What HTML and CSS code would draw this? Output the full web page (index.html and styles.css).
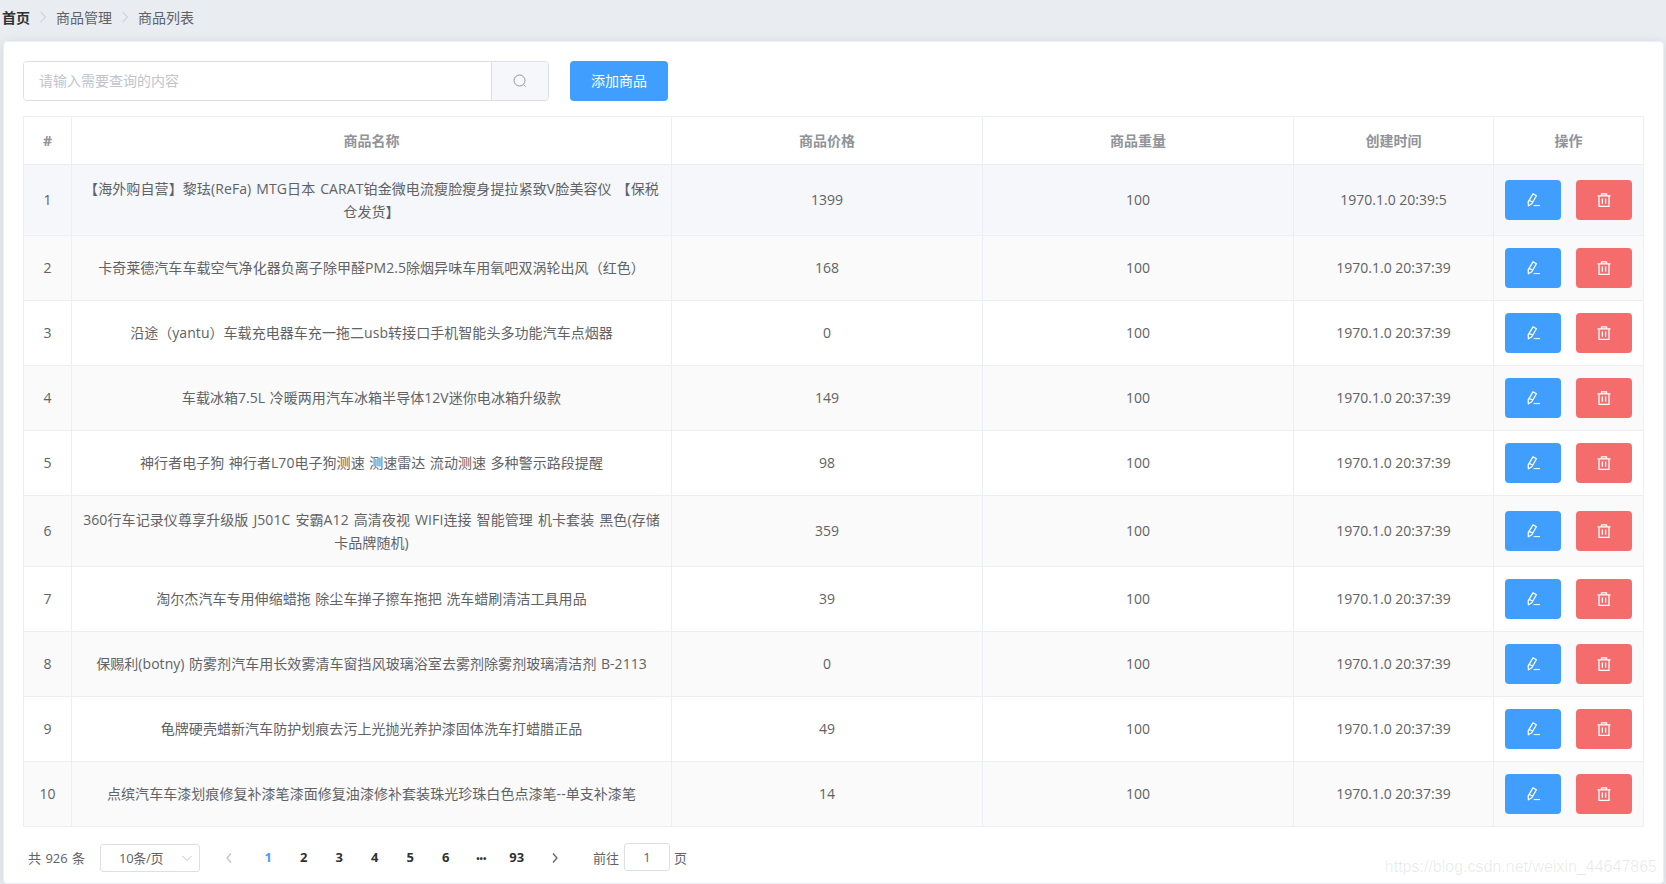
FILE: index.html
```html
<!DOCTYPE html>
<html lang="zh-CN">
<head>
<meta charset="utf-8">
<title>商品列表</title>
<link rel="stylesheet" href="styles.css">
</head>
<body>
<svg class="defs" width="0" height="0" aria-hidden="true">
  <symbol id="i-edit" viewBox="0 0 14 14"><path d="M2.4 12.8 2.2 8.8 7 .8 10.4 2.8 5.8 10.8Z M3.2 7.2 6.8 9.3" fill="none" stroke="currentColor" stroke-width="1.3" stroke-linejoin="round"/><path d="M7.6 12.6H14" fill="none" stroke="currentColor" stroke-width="1"/></symbol>
  <symbol id="i-del" viewBox="0 0 14 14"><path d="M.5 2.8H13.5M4.5 2.8V.8H9.5V2.8M2 2.8V13.3H12V2.8M5.4 5.6V10.8M8.6 5.6V10.8" fill="none" stroke="currentColor" stroke-width="1.3"/></symbol>
</svg>
<nav class="crumbs">
  <span class="crumb-home">首页</span>
  <svg class="crumb-sep" viewBox="0 0 8 12"><path d="M1.5 1 6.5 6 1.5 11" fill="none" stroke="currentColor"/></svg>
  <span>商品管理</span>
  <svg class="crumb-sep" viewBox="0 0 8 12"><path d="M1.5 1 6.5 6 1.5 11" fill="none" stroke="currentColor"/></svg>
  <span>商品列表</span>
</nav>
<main class="card">
  <div class="toolbar">
    <div class="search">
      <input class="search-input" placeholder="请输入需要查询的内容">
      <span class="search-btn"><svg class="search-icon" viewBox="0 0 14 14"><circle cx="6.5" cy="6.5" r="5.5" fill="none" stroke="currentColor"/><path d="M10.6 10.6 12.6 12.6" fill="none" stroke="currentColor"/></svg></span>
    </div>
    <button class="add-btn">添加商品</button>
  </div>
  <table class="goods">
    <colgroup><col class="c-idx"><col class="c-name"><col class="c-price"><col class="c-weight"><col class="c-time"><col class="c-op"></colgroup>
    <thead><tr><th>#</th><th>商品名称</th><th>商品价格</th><th>商品重量</th><th>创建时间</th><th>操作</th></tr></thead>
    <tbody>
      <tr class="hover"><td>1</td><td class="two">【海外购自营】黎珐(ReFa) MTG日本 CARAT铂金微电流瘦脸瘦身提拉紧致V脸美容仪 【保税仓发货】</td><td>1399</td><td>100</td><td>1970.1.0 20:39:5</td><td class="ops"><button class="op edit"><svg class="op-icon"><use href="#i-edit"/></svg></button><button class="op del"><svg class="op-icon"><use href="#i-del"/></svg></button></td></tr>
      <tr><td>2</td><td>卡奇莱德汽车车载空气净化器负离子除甲醛PM2.5除烟异味车用氧吧双涡轮出风（红色）</td><td>168</td><td>100</td><td>1970.1.0 20:37:39</td><td class="ops"><button class="op edit"><svg class="op-icon"><use href="#i-edit"/></svg></button><button class="op del"><svg class="op-icon"><use href="#i-del"/></svg></button></td></tr>
      <tr><td>3</td><td>沿途（yantu）车载充电器车充一拖二usb转接口手机智能头多功能汽车点烟器</td><td>0</td><td>100</td><td>1970.1.0 20:37:39</td><td class="ops"><button class="op edit"><svg class="op-icon"><use href="#i-edit"/></svg></button><button class="op del"><svg class="op-icon"><use href="#i-del"/></svg></button></td></tr>
      <tr><td>4</td><td>车载冰箱7.5L 冷暖两用汽车冰箱半导体12V迷你电冰箱升级款</td><td>149</td><td>100</td><td>1970.1.0 20:37:39</td><td class="ops"><button class="op edit"><svg class="op-icon"><use href="#i-edit"/></svg></button><button class="op del"><svg class="op-icon"><use href="#i-del"/></svg></button></td></tr>
      <tr><td>5</td><td>神行者电子狗 神行者L70电子狗测速 测速雷达 流动测速 多种警示路段提醒</td><td>98</td><td>100</td><td>1970.1.0 20:37:39</td><td class="ops"><button class="op edit"><svg class="op-icon"><use href="#i-edit"/></svg></button><button class="op del"><svg class="op-icon"><use href="#i-del"/></svg></button></td></tr>
      <tr><td>6</td><td class="two">360行车记录仪尊享升级版 J501C 安霸A12 高清夜视 WIFI连接 智能管理 机卡套装 黑色(存储卡品牌随机)</td><td>359</td><td>100</td><td>1970.1.0 20:37:39</td><td class="ops"><button class="op edit"><svg class="op-icon"><use href="#i-edit"/></svg></button><button class="op del"><svg class="op-icon"><use href="#i-del"/></svg></button></td></tr>
      <tr><td>7</td><td>淘尔杰汽车专用伸缩蜡拖 除尘车掸子擦车拖把 洗车蜡刷清洁工具用品</td><td>39</td><td>100</td><td>1970.1.0 20:37:39</td><td class="ops"><button class="op edit"><svg class="op-icon"><use href="#i-edit"/></svg></button><button class="op del"><svg class="op-icon"><use href="#i-del"/></svg></button></td></tr>
      <tr><td>8</td><td>保赐利(botny) 防雾剂汽车用长效雾清车窗挡风玻璃浴室去雾剂除雾剂玻璃清洁剂 B-2113</td><td>0</td><td>100</td><td>1970.1.0 20:37:39</td><td class="ops"><button class="op edit"><svg class="op-icon"><use href="#i-edit"/></svg></button><button class="op del"><svg class="op-icon"><use href="#i-del"/></svg></button></td></tr>
      <tr><td>9</td><td>龟牌硬壳蜡新汽车防护划痕去污上光抛光养护漆固体洗车打蜡腊正品</td><td>49</td><td>100</td><td>1970.1.0 20:37:39</td><td class="ops"><button class="op edit"><svg class="op-icon"><use href="#i-edit"/></svg></button><button class="op del"><svg class="op-icon"><use href="#i-del"/></svg></button></td></tr>
      <tr><td>10</td><td>点缤汽车车漆划痕修复补漆笔漆面修复油漆修补套装珠光珍珠白色点漆笔--单支补漆笔</td><td>14</td><td>100</td><td>1970.1.0 20:37:39</td><td class="ops"><button class="op edit"><svg class="op-icon"><use href="#i-edit"/></svg></button><button class="op del"><svg class="op-icon"><use href="#i-del"/></svg></button></td></tr>
    </tbody>
  </table>
  <div class="pager">
    <span class="total">共 926 条</span>
    <span class="size">10条/页<svg class="size-arrow" viewBox="0 0 12 12"><path d="M1.5 4 6 8.5 10.5 4" fill="none" stroke="currentColor"/></svg></span>
    <span class="nav prev"><svg viewBox="0 0 8 12"><path d="M6 1.5 2 6 6 10.5" fill="none" stroke="currentColor" stroke-width="1.3"/></svg></span>
    <span class="num on">1</span><span class="num">2</span><span class="num">3</span><span class="num">4</span><span class="num">5</span><span class="num">6</span><span class="num dots">•••</span><span class="num">93</span>
    <span class="nav next"><svg viewBox="0 0 8 12"><path d="M2 1.5 6 6 2 10.5" fill="none" stroke="currentColor" stroke-width="1.3"/></svg></span>
    <span class="goto">前往</span><span class="goto-box">1</span><span class="goto-end">页</span>
  </div>
  <div class="mark">https://blog.csdn.net/weixin_44647865</div>
</main>
</body>
</html>
```
FILE: styles.css
```css
* { box-sizing: border-box; }
html, body { margin: 0; height: 100%; }
body {
  background: #e9edf2;
  padding: 0 2px 0 3px;
  height: 884px;
  overflow: hidden;
  font-family: "Open Sans", "Noto Sans CJK SC", sans-serif;
  font-size: 14px;
  color: #606266;
}
.defs { position: absolute; }
.crumbs {
  height: 41px;
  display: flex;
  align-items: center;
  gap: 9px;
  margin-left: -1px;
  padding-bottom: 8px;
  font-size: 14px;
}
.crumb-home { font-weight: 700; color: #303133; }
.crumb-sep { width: 8px; height: 12px; color: #c0c4cc; }
.card {
  position: relative;
  height: 843px;
  background: #fff;
  border: 1px solid #ebeef5;
  border-radius: 4px;
  box-shadow: 0 2px 12px rgba(0, 0, 0, .1);
  padding: 19px;
}
.toolbar { display: flex; gap: 21px; margin-bottom: 15px; }
.search {
  width: 526px;
  height: 40px;
  display: flex;
  border: 1px solid #dcdfe6;
  border-radius: 4px;
  overflow: hidden;
}
.search-input {
  flex: 1;
  min-width: 0;
  border: 0;
  outline: 0;
  padding: 0 15px 2px;
  font: inherit;
  background: #fff;
}
.search-input::placeholder { color: #c0c4cc; opacity: 1; }
.search-btn {
  width: 57px;
  display: flex;
  align-items: center;
  justify-content: center;
  background: #f5f7fa;
  border-left: 1px solid #dcdfe6;
  color: #909399;
}
.search-icon { width: 14px; height: 14px; }
.add-btn {
  width: 98px;
  height: 40px;
  border: 0;
  border-radius: 4px;
  background: #409eff;
  color: #fff;
  font: inherit;
  padding: 0 0 2px;
}
.goods {
  width: 1620px;
  table-layout: fixed;
  border-collapse: collapse;
  color: #606266;
}
.c-idx { width: 48px; }
.c-name { width: 600px; }
.c-price { width: 311px; }
.c-weight { width: 311px; }
.c-time { width: 200px; }
.c-op { width: 150px; }
.goods th, .goods td {
  border: 1px solid #ebeef5;
  text-align: center;
  line-height: 23px;
  padding: 11px 10px 13px;
}
.goods td:nth-child(2) { letter-spacing: .05px; word-spacing: .8px; }
.goods td.two { padding: 12px 10px; letter-spacing: .1px; word-spacing: 1.2px; }
.goods th { color: #909399; font-weight: 700; height: 48px; padding: 0 10px; }
.goods td { height: 65px; }
.goods tbody tr:nth-child(even) { background: #fafafa; }
.goods tbody tr.hover { background: #f5f7fa; }
.goods td.ops { padding: 0 11px; white-space: nowrap; font-size: 0; }
.op {
  width: 56px;
  height: 40px;
  border: 0;
  border-radius: 4px;
  padding: 0;
  color: #fff;
  vertical-align: middle;
}
.edit { background: #409eff; }
.del { background: #f56c6c; margin-left: 15px; }
.op-icon { display: block; width: 14px; height: 14px; margin: 0 auto; }
.pager {
  display: flex;
  align-items: center;
  height: 28px;
  margin-top: 17px;
  padding-left: 5px;
  font-size: 13px;
}
.total { width: 72px; word-spacing: 1px; padding-bottom: 2px; }
.size {
  width: 100px;
  height: 28px;
  display: flex;
  align-items: center;
  justify-content: space-between;
  padding: 0 6px 2px 18px;
  border: 1px solid #dcdfe6;
  border-radius: 3px;
  letter-spacing: -.3px;
}
.size-arrow { width: 12px; height: 12px; color: #c0c4cc; margin-top: 2px; }
.nav { display: flex; align-items: center; justify-content: center; width: 35.5px; height: 28px; }
.nav svg { width: 8px; height: 12px; }
.prev { margin-left: 11px; color: #c0c4cc; margin-right: 4px; }
.next { color: #606266; margin-left: 3px; }
.num { width: 35.5px; text-align: center; font-weight: 700; color: #303133; padding-bottom: 2px; }
.on { color: #409eff; }
.dots { font-size: 9px; padding-bottom: 0; }
.goto { margin-left: 20px; padding-bottom: 2px; }
.goto-end { padding-bottom: 2px; }
.goto-box {
  width: 46px;
  height: 28px;
  margin: -2px 4px 0 5px;
  display: flex;
  align-items: center;
  justify-content: center;
  border: 1px solid #dcdfe6;
  border-radius: 3px;
}
.mark {
  position: absolute;
  right: 6px;
  bottom: 7px;
  font-family: "Liberation Sans", sans-serif;
  font-size: 16px;
  color: rgba(0, 0, 0, .09);
}
```
